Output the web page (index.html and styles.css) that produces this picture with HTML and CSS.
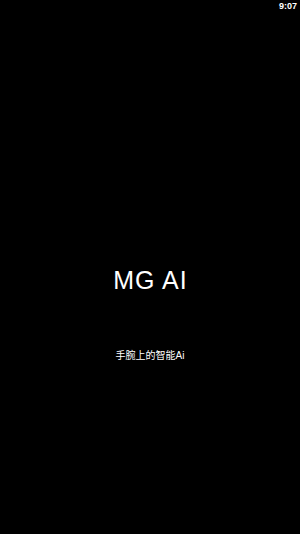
FILE: index.html
```html
<!DOCTYPE html>
<html>
<head>
<meta charset="utf-8">
<link rel="stylesheet" href="styles.css">
</head>
<body>
<div class="screen">
  <div class="status"><span class="time">9:07</span></div>
  <div class="center">
    <div class="title">MG AI</div>
    <div class="subtitle">手腕上的智能Ai</div>
  </div>
</div>
</body>
</html>
```
FILE: styles.css
```css
html, body { margin: 0; padding: 0; background: #000; }
.screen {
  width: 300px;
  height: 534px;
  background: #000;
  color: #fff;
  font-family: "Liberation Sans", "Noto Sans CJK SC", sans-serif;
  display: flex;
  flex-direction: column;
}
.status {
  height: 12px;
  display: flex;
  justify-content: flex-end;
  padding-right: 3px;
}
.time {
  font-size: 9px;
  font-weight: bold;
  line-height: 12px;
}
.center {
  display: flex;
  flex-direction: column;
  align-items: center;
  padding-top: 253px;
}
.title {
  font-size: 25px;
  line-height: 30px;
  letter-spacing: 1px;
  padding-left: 1px;
}
.subtitle {
  margin-top: 54px;
  font-size: 10px;
  line-height: 14px;
}
```
